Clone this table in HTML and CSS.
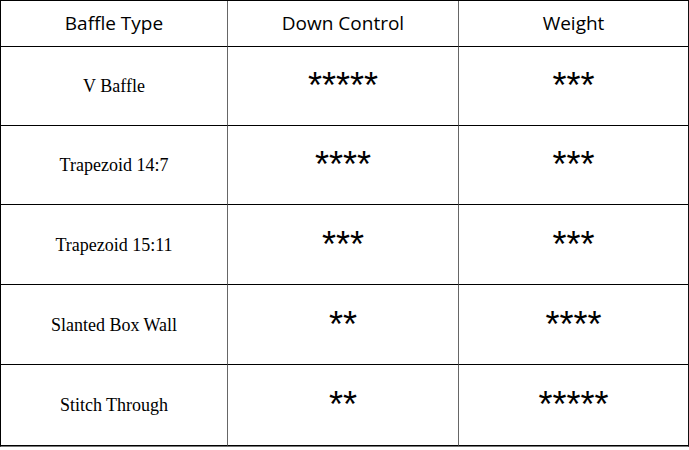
FILE: index.html
```html
<!DOCTYPE html>
<html>
<head>
<meta charset="utf-8">
<link rel="stylesheet" href="styles.css">
</head>
<body>
<div class="table">
  <div class="cell head">Baffle Type</div>
  <div class="cell head">Down Control</div>
  <div class="cell head last">Weight</div>

  <div class="cell name">V Baffle</div>
  <div class="cell stars">*****</div>
  <div class="cell stars last">***</div>

  <div class="cell name">Trapezoid 14:7</div>
  <div class="cell stars">****</div>
  <div class="cell stars last">***</div>

  <div class="cell name">Trapezoid 15:11</div>
  <div class="cell stars">***</div>
  <div class="cell stars last">***</div>

  <div class="cell name">Slanted Box Wall</div>
  <div class="cell stars">**</div>
  <div class="cell stars last">****</div>

  <div class="cell name">Stitch Through</div>
  <div class="cell stars">**</div>
  <div class="cell stars last">*****</div>
</div>
</body>
</html>
```
FILE: styles.css
```css
html, body {
  margin: 0;
  padding: 0;
  background: #ffffff;
}
.table {
  width: 689px;
  box-sizing: border-box;
  display: grid;
  grid-template-columns: 227px 231px 1fr;
  grid-template-rows: 46px 79px 79px 80px 80px 81px;
  border-top: 1px solid #000;
  border-left: 1px solid #000;
  border-right: 1px solid #111;
  border-bottom: 1px solid #777;
}
.cell {
  box-sizing: border-box;
  border-bottom: 1px solid #000;
  border-right: 1px solid #666;
  display: flex;
  align-items: center;
  justify-content: center;
  color: #000;
}
.cell.last {
  border-right: none;
}
.head {
  font-family: "Open Sans", sans-serif;
  font-size: 19px;
  font-weight: 500;
  padding-bottom: 1px;
}
.name {
  font-family: "Liberation Serif", "DejaVu Serif", serif;
  font-size: 18px;
  padding-top: 1px;
}
.stars {
  font-family: "Liberation Sans", Arial, sans-serif;
  font-size: 36px;
  line-height: 1;
}
```
